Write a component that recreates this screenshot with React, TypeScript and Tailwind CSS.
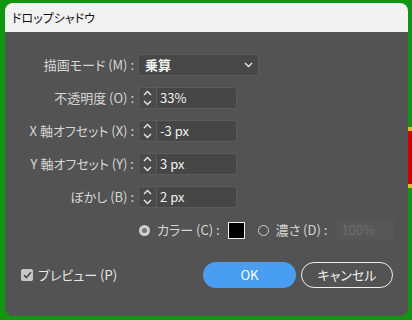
import React from "react";

const font = {
  fontFamily: '"Noto Sans CJK JP", "Noto Sans", sans-serif',
  fontFeatureSettings: '"palt"',
};

function Chevron({ up = false }: { up?: boolean }) {
  return (
    <svg width="9" height="6" viewBox="0 0 9 6" className="block">
      <path
        d={up ? "M1 5 L4.5 1.5 L8 5" : "M1 1 L4.5 4.5 L8 1"}
        fill="none"
        stroke="#e6e6e6"
        strokeWidth="1.4"
      />
    </svg>
  );
}

function Spin({ value }: { value: string }) {
  return (
    <div className="flex h-[22px]">
      <div className="flex w-[19px] flex-col items-center justify-center gap-[4px] rounded-l-[3px] border border-[#5c5c5c] bg-[#4a4a4a]">
        <Chevron up />
        <Chevron />
      </div>
      <div className="flex w-[80px] items-center rounded-r-[3px] border border-l-0 border-[#5c5c5c] bg-[#464646] pl-[3px] text-[13px] text-[#f2f2f2]">
        {value}
      </div>
    </div>
  );
}

function Label({ children }: { children: React.ReactNode }) {
  return (
    <div className="flex h-[22px] items-center justify-end whitespace-nowrap text-[13px] text-[#d6d6d6]">
      {children}
    </div>
  );
}

export default function App() {
  return (
    <div
      className="relative h-[320px] w-[412px] overflow-hidden bg-[#109610] pl-[5px] pt-[3px]"
      style={font}
    >
      <div className="absolute right-0 top-[127px] h-[61px] w-[4px] bg-[#e0c020] py-[4px]">
        <div className="h-full w-full bg-[#d40000]" />
      </div>
      <div className="relative flex h-[313px] w-[403px] flex-col overflow-hidden rounded-[8px] bg-[#535353]">
        <div className="flex h-[29px] items-center bg-[#f2f2f2] px-[7px] text-[12px] text-[#111]">
          ドロップシャドウ
        </div>
        <div className="mt-[22px] grid grid-cols-[129px_auto] gap-x-[4px] gap-y-[11px]">
          <Label>描画モード (M) :</Label>
          <div className="flex h-[22px] w-[121px] items-center justify-between rounded-[3px] border border-[#5c5c5c] bg-[#474747] pl-[6px] pr-[5px] text-[13px] font-bold text-[#f2f2f2]">
            <span>乗算</span>
            <Chevron />
          </div>
          <Label>不透明度 (O) :</Label>
          <Spin value="33%" />
          <Label>X 軸オフセット (X) :</Label>
          <Spin value="-3 px" />
          <Label>Y 軸オフセット (Y) :</Label>
          <Spin value="3 px" />
          <Label>ぼかし (B) :</Label>
          <Spin value="2 px" />
          <div />
          <div className="flex h-[22px] items-center whitespace-nowrap text-[13px] text-[#d6d6d6]">
            <div className="ml-[1px] flex h-[11px] w-[11px] shrink-0 items-center justify-center rounded-full bg-[#cfcfcf]">
              <div className="h-[5px] w-[5px] rounded-full bg-[#777]" />
            </div>
            <span className="ml-[7px]">カラー (C) :</span>
            <div className="ml-[8px] h-[17px] w-[17px] shrink-0 border border-[#f0f0f0] bg-black" />
            <div className="ml-[13px] h-[11px] w-[11px] shrink-0 rounded-full border-[1.5px] border-[#cfcfcf]" />
            <span className="ml-[7px]">濃さ (D) :</span>
            <div className="ml-[10px] flex h-[22px] w-[57px] items-center bg-[#575757] pl-[4px] text-[13px] text-[#6e6e6e]">
              100%
            </div>
          </div>
        </div>
        <div className="mt-[21px] flex items-center pl-[16px] pr-[15px]">
          <div className="flex h-[12px] w-[12px] items-center justify-center rounded-[2px] bg-[#c8c8c8]">
            <svg width="9" height="8" viewBox="0 0 9 8">
              <path d="M1 4.2 L3.4 6.5 L8 1.3" fill="none" stroke="#4a4a4a" strokeWidth="1.6" />
            </svg>
          </div>
          <span className="ml-[5px] text-[13px] text-[#e6e6e6]">プレビュー (P)</span>
          <div className="ml-auto flex gap-[5px]">
            <div className="flex h-[26px] w-[93px] items-center justify-center rounded-full bg-[#4a9ef2] text-[13px] text-white">
              OK
            </div>
            <div className="flex h-[26px] w-[92px] items-center justify-center rounded-full border-[1.5px] border-[#f0f0f0] text-[13px] text-[#f0f0f0]">
              キャンセル
            </div>
          </div>
        </div>
      </div>
    </div>
  );
}
